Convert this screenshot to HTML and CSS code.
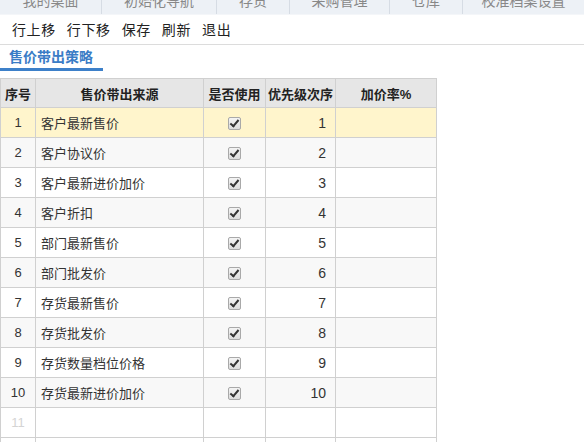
FILE: index.html
```html
<!DOCTYPE html>
<html>
<head>
<meta charset="utf-8">
<link rel="stylesheet" href="styles.css">
</head>
<body>
<div class="topbar">
  <span class="ttab t1">我的桌面</span>
  <span class="ttab t2">初始化导航</span>
  <span class="ttab t3">存货</span>
  <span class="ttab t4">采购管理</span>
  <span class="ttab t5">仓库</span>
  <span class="ttab t6">校准档案设置</span>
</div>
<div class="toolbar">
  <span class="btn">行上移</span>
  <span class="btn">行下移</span>
  <span class="btn">保存</span>
  <span class="btn">刷新</span>
  <span class="btn">退出</span>
</div>
<div class="tabs">
  <span class="tab active">售价带出策略</span>
</div>
<table class="grid">
  <colgroup>
    <col class="c1"><col class="c2"><col class="c3"><col class="c4"><col class="c5">
  </colgroup>
  <thead>
    <tr><th>序号</th><th>售价带出来源</th><th>是否使用</th><th>优先级次序</th><th>加价率%</th></tr>
  </thead>
  <tbody>
    <tr class="sel"><td class="no">1</td><td>客户最新售价</td><td class="ck"><span class="cb"></span></td><td class="pr">1</td><td></td></tr>
    <tr class="alt"><td class="no">2</td><td>客户协议价</td><td class="ck"><span class="cb"></span></td><td class="pr">2</td><td></td></tr>
    <tr><td class="no">3</td><td>客户最新进价加价</td><td class="ck"><span class="cb"></span></td><td class="pr">3</td><td></td></tr>
    <tr class="alt"><td class="no">4</td><td>客户折扣</td><td class="ck"><span class="cb"></span></td><td class="pr">4</td><td></td></tr>
    <tr><td class="no">5</td><td>部门最新售价</td><td class="ck"><span class="cb"></span></td><td class="pr">5</td><td></td></tr>
    <tr class="alt"><td class="no">6</td><td>部门批发价</td><td class="ck"><span class="cb"></span></td><td class="pr">6</td><td></td></tr>
    <tr><td class="no">7</td><td>存货最新售价</td><td class="ck"><span class="cb"></span></td><td class="pr">7</td><td></td></tr>
    <tr class="alt"><td class="no">8</td><td>存货批发价</td><td class="ck"><span class="cb"></span></td><td class="pr">8</td><td></td></tr>
    <tr><td class="no">9</td><td>存货数量档位价格</td><td class="ck"><span class="cb"></span></td><td class="pr">9</td><td></td></tr>
    <tr class="alt"><td class="no">10</td><td>存货最新进价加价</td><td class="ck"><span class="cb"></span></td><td class="pr">10</td><td></td></tr>
    <tr><td class="no empty">11</td><td></td><td></td><td></td><td></td></tr>
    <tr><td class="no empty">12</td><td></td><td></td><td></td><td></td></tr>
  </tbody>
</table>
</body>
</html>
```
FILE: styles.css
```css
html, body {
  margin: 0;
  padding: 0;
  background: #fff;
  overflow: hidden;
  font-family: "Noto Sans CJK SC", "Liberation Sans", sans-serif;
  color: #333;
}
.topbar {
  height: 14px;
  background: #edf1f6;
  border-bottom: 1px solid #f4f6f9;
  overflow: hidden;
  display: flex;
}
.ttab {
  font-size: 14px;
  line-height: 20px;
  color: #888;
  margin-top: -10px;
  height: 24px;
  box-sizing: border-box;
  border-right: 1px solid #d6dce4;
  text-align: center;
}
.t1 { width: 102px; }
.t2 { width: 115px; }
.t3 { width: 73px; }
.t4 { width: 100px; }
.t5 { width: 73px; }
.t6 { width: 121px; border-right: none; }
.toolbar {
  height: 30px;
  display: flex;
  align-items: center;
  gap: 11px;
  padding-left: 12px;
  padding-bottom: 1px;
  box-sizing: border-box;
  border-bottom: 1px solid #dcdcdc;
}
.btn {
  font-size: 14px;
  line-height: 18px;
  color: #222;
  letter-spacing: 0.6px;
}
.tabs {
  height: 26px;
  display: flex;
}
.tab {
  font-size: 14px;
  font-weight: bold;
  color: #3a7cc6;
  width: 103px;
  box-sizing: border-box;
  padding-left: 9px;
  line-height: 22px;
  border-bottom: 3px solid #3d80c9;
  height: 26px;
}
.grid {
  margin-top: 7px;
  border-collapse: collapse;
  table-layout: fixed;
  width: 436px;
  font-family: "Liberation Sans", "Noto Sans CJK SC", sans-serif;
  font-size: 13px;
}
.c1 { width: 35px; }
.c2 { width: 168px; }
.c3 { width: 62px; }
.c4 { width: 70px; }
.c5 { width: 101px; }
.grid th, .grid td {
  border: 1px solid #d0d0d0;
  height: 30px;
  padding: 0;
  box-sizing: border-box;
  white-space: nowrap;
  overflow: hidden;
}
.grid th {
  background: #e6e6e6;
  font-weight: bold;
  color: #222;
  text-align: center;
  height: 29px;
}
.grid td { padding-left: 5px; color: #333; }
.grid td.no { text-align: center; padding-left: 0; }
.grid td.empty { color: #d4d4d4; }
.grid td.ck { text-align: center; padding-left: 0; }
.grid td.pr { text-align: right; padding-right: 9px; font-size: 14px; }
.grid tr.sel td { background: #fff5cc; }
.grid tr.alt td { background: #f8f8f8; }
.cb {
  display: inline-block;
  width: 11px;
  height: 11px;
  border: 1px solid #a9a9a9;
  border-radius: 2px;
  background: linear-gradient(#f4f4f4, #dcdcdc);
  vertical-align: middle;
  position: relative;
}
.cb::after {
  content: "";
  position: absolute;
  left: 3px;
  top: 0px;
  width: 3px;
  height: 7px;
  border-right: 2px solid #333;
  border-bottom: 2px solid #333;
  transform: rotate(40deg);
}
```
